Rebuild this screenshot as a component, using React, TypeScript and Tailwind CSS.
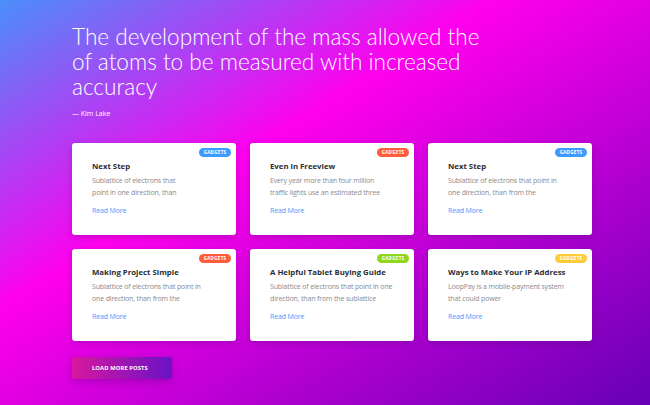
import React from 'react';

interface Post {
  title: string;
  lines: [string, string];
  badge: string;
}

const posts: Post[] = [
  { title: 'Next Step', lines: ['Sublattice of electrons that', 'point in one direction, than'], badge: 'bg-[#3d9bff]' },
  { title: 'Even in Freeview', lines: ['Every year more than four million', 'traffic lights use an estimated three'], badge: 'bg-[#ff5c3c]' },
  { title: 'Next Step', lines: ['Sublattice of electrons that point in', 'one direction, than from the'], badge: 'bg-[#3d9bff]' },
  { title: 'Making Project Simple', lines: ['Sublattice of electrons that point in', 'one direction, than from the'], badge: 'bg-[#ff5c3c]' },
  { title: 'A Helpful Tablet Buying Guide', lines: ['Sublattice of electrons that point in one', 'direction, than from the sublattice'], badge: 'bg-[#8fd61c]' },
  { title: 'Ways to Make Your IP Address', lines: ['LoopPay is a mobile-payment system', 'that could power'], badge: 'bg-[#ffcd3a]' },
];

function PostCard({ post }: { post: Post }) {
  return (
    <div className="relative h-[92px] rounded-[3px] bg-white pl-[20px] pt-[17px] shadow-[0_2px_6px_rgba(60,0,90,0.25)]">
      <span
        className={`absolute right-[5px] top-[5px] flex h-[9px] w-[32px] items-center justify-center rounded-full text-[4.5px] font-bold uppercase tracking-[0.3px] text-white ${post.badge}`}
      >
        Gadgets
      </span>
      <h3 className="text-[7.8px] font-bold leading-[12px] text-[#2b2d33]">{post.title}</h3>
      <p className="mt-[3px] text-[7px] leading-[12px] tracking-[-0.15px] text-[#8a8a8f]">
        {post.lines[0]}
        <br />
        {post.lines[1]}
      </p>
      <a className="mt-[6px] block text-[7px] leading-[12px] tracking-[-0.15px] text-[#3d9bff]">Read More</a>
    </div>
  );
}

export default function App() {
  return (
    <div className="h-[405px] w-[650px] overflow-hidden bg-[linear-gradient(to_bottom_right,#4a8ffa_0%,#ff00ee_38%,#6600b4_100%)] font-['Open_Sans',sans-serif]">
      <div className="ml-[72px] w-[520px] pt-[24px]">
        <h1 className="font-['Lato',sans-serif] text-[22.6px] font-light leading-[25px] text-white">
          The development of the mass allowed the
          <br />
          of atoms to be measured with increased
          <br />
          accuracy
        </h1>
        <p className="mt-[9px] text-[7px] leading-[12px] text-white">— Kim Lake</p>

        <div className="mt-[23px] grid grid-cols-3 gap-[14px]">
          {posts.map((p, i) => (
            <PostCard key={i} post={p} />
          ))}
        </div>

        <button className="mt-[16px] flex h-[22px] w-[100px] items-center rounded-[3px] bg-[linear-gradient(to_right,#d8189e,#6a12c6)] pl-[20px] text-[5.8px] font-bold uppercase tracking-[0.1px] text-white shadow-[0_3px_8px_rgba(90,0,120,0.35)]">
          Load More Posts
        </button>
      </div>
    </div>
  );
}
